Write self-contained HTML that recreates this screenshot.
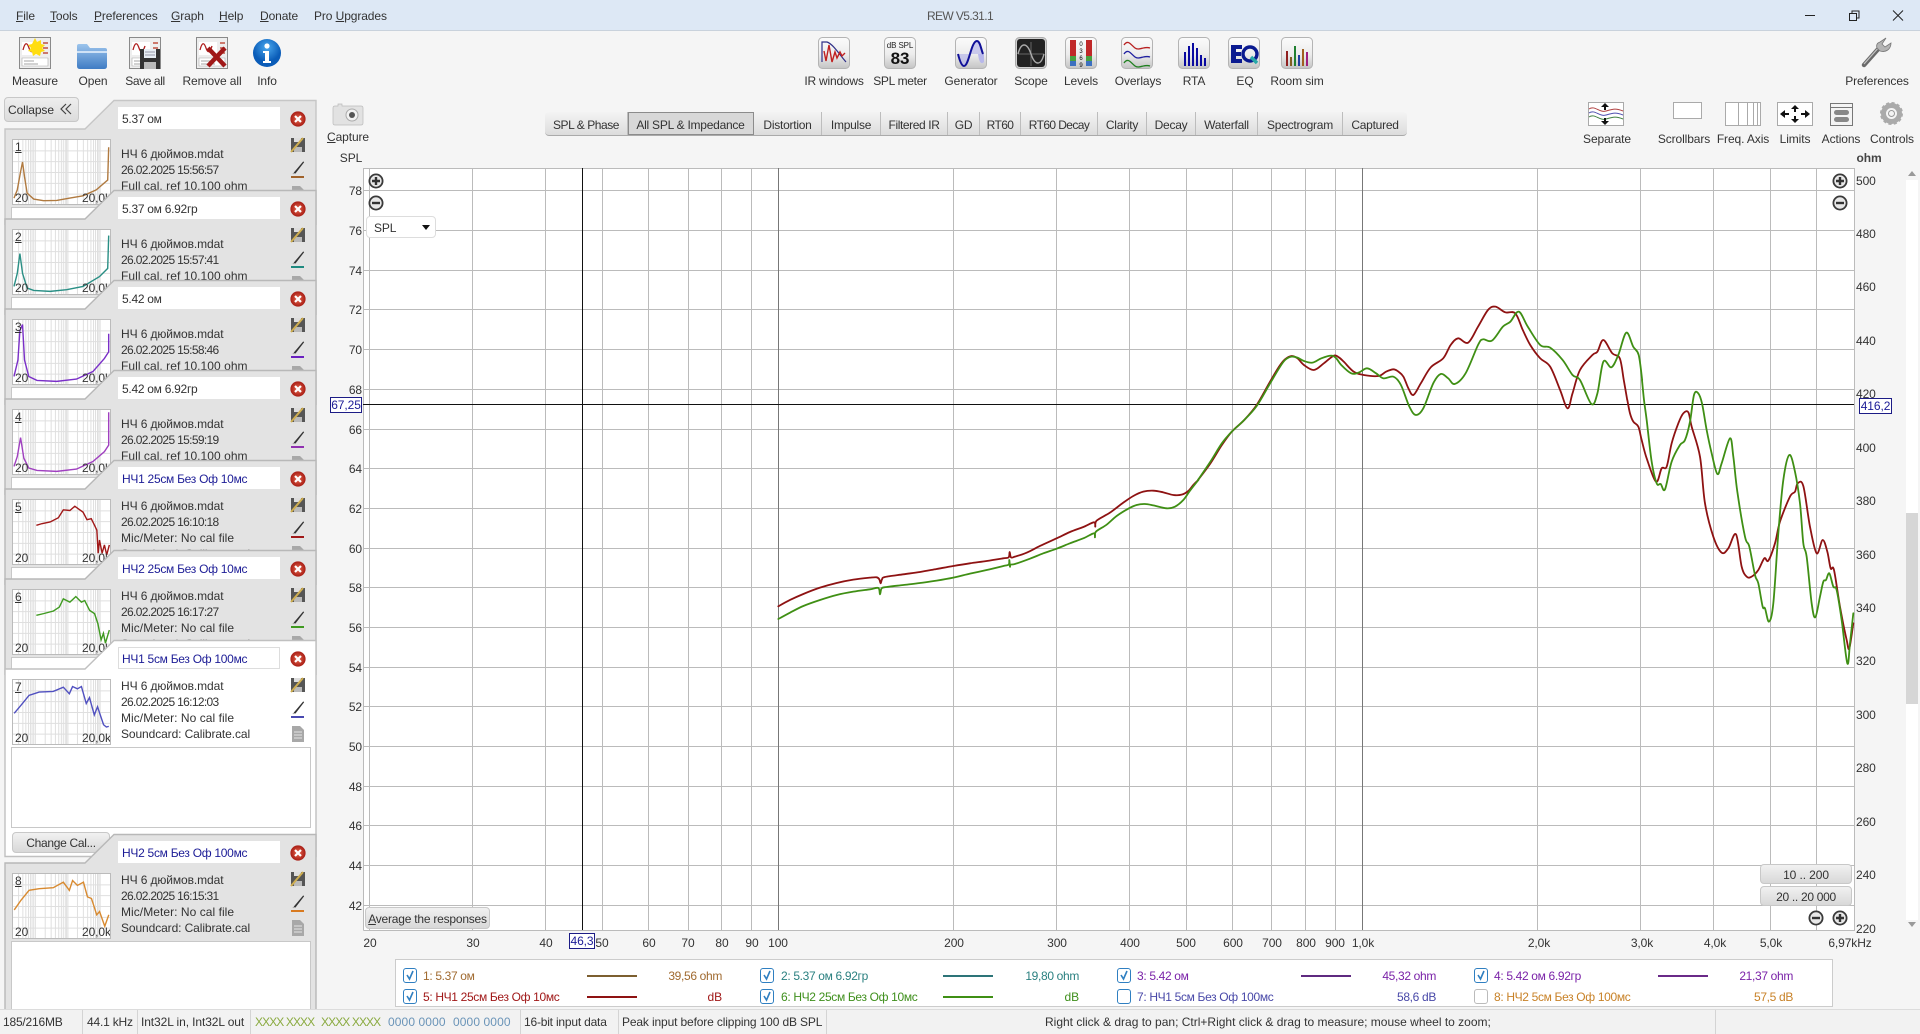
<!DOCTYPE html>
<html><head><meta charset="utf-8"><title>REW V5.31.1</title>
<style>
html,body{margin:0;padding:0;background:#f5f5f5}
#r{position:relative;width:1920px;height:1034px;overflow:hidden;background:#f5f5f5;font:12px/16px "Liberation Sans","Noto Sans CJK SC",sans-serif;color:#333;letter-spacing:-.1px}
.t{position:absolute;white-space:nowrap;line-height:16px}
.c{transform:translateX(-50%)}
.e{transform:translateX(-100%)}
.u{text-decoration:underline}
svg{position:absolute;overflow:visible}
.p{position:absolute;left:0;width:320px}
.n{position:absolute;left:118px;top:7px;width:162px;height:22px;background:#fff;line-height:25px;text-indent:4px;white-space:nowrap;letter-spacing:-.28px}
.b{color:#1c1c96}
.w .n{outline:1px solid #ddd;outline-offset:-1px}
.th{position:absolute;left:13px;top:40px;width:97px;height:64px;background:#fff;outline:1px solid #bbb;overflow:hidden}
.th svg{left:0;top:0;width:97px;height:64px}
.th i{position:absolute;font-style:normal;line-height:14px}
.box{position:absolute;left:12px;top:108px;width:298px;background:#fff;outline:1px solid #c8c8c8;height:120px}
.btn{position:absolute;text-align:center;background:linear-gradient(#f1f1f1,#d8d8d8);border:1px solid #c8c8c8;border-radius:4px;box-sizing:border-box;white-space:nowrap}
.tab{position:absolute;top:112px;height:23px;line-height:26px;text-align:center;border-right:1px solid #bdbdbd;box-sizing:border-box;white-space:nowrap;letter-spacing:-.25px}
.sep{position:absolute;top:1010px;width:1px;height:24px;background:#d4d4d4}
.lg{position:absolute;height:2px;width:50px}
.ck{position:absolute;width:12px;height:13px;border:1.5px solid #2f7fc1;border-radius:3px;background:#fff}
.ck svg{left:1px;top:1px}
.ck.o{border-color:#bbb}
.m{letter-spacing:-.1px}
.d{letter-spacing:-.66px}
.k{letter-spacing:.05px}
.y{letter-spacing:-.34px}
</style></head><body><div id="r">
<svg width="0" height="0" style="position:absolute"><defs>
<linearGradient id="g" x1="0" y1="0" x2="0" y2="1"><stop offset="0" stop-color="#fbfbfb"/><stop offset=".55" stop-color="#ececec"/><stop offset="1" stop-color="#c4c4c4"/></linearGradient>
<linearGradient id="fd" x1="0" y1="0" x2="0" y2="1"><stop offset="0" stop-color="#9cc4ec"/><stop offset="1" stop-color="#3f7cc4"/></linearGradient>
<radialGradient id="rd"><stop offset="0" stop-color="#e86a50"/><stop offset="1" stop-color="#a81c14"/></radialGradient>
<radialGradient id="bl" cx=".5" cy=".3"><stop offset="0" stop-color="#4aa8ee"/><stop offset="1" stop-color="#0a5cb8"/></radialGradient>
<symbol id="x" viewBox="0 0 16 16"><circle cx="8" cy="8" r="7.6" fill="url(#rd)"/><path d="M5 5l6 6M11 5l-6 6" stroke="#fff" stroke-width="2.2" fill="none"/></symbol>
<symbol id="sv" viewBox="0 0 16 16"><path d="M1 1h14v14H1z" fill="#555"/><path d="M4 10h8v5H4z" fill="#bbb"/><path d="M4 1h7v4H4z" fill="#ddd"/><path d="M1 15L13 1" stroke="#cfae50" stroke-width="2"/></symbol>
<symbol id="pn" viewBox="0 0 16 16"><path d="M3 14L14 1l1 1L5 15z" fill="#333"/><path d="M2 15l2 0" stroke="#999"/></symbol>
<symbol id="dc" viewBox="0 0 12 16"><path d="M0 0h8l4 4v12H0z" fill="#a8a8a8"/><path d="M2 6h8M2 9h8M2 12h8" stroke="#e4e4e4"/></symbol>
<symbol id="tg" viewBox="0 0 295 195" preserveAspectRatio="none"><path fill="none" stroke="#dfdfdf" stroke-width="3" d="M17 0v195M30 0v195M39 0v195M47 0v195M53 0v195M58 0v195M63 0v195M68 0v195M98 0v195M116 0v195M129 0v195M139 0v195M147 0v195M153 0v195M159 0v195M163 0v195M167 0v195M196 0v195M214 0v195M227 0v195M237 0v195M245 0v195M251 0v195M257 0v195M261 0v195M265 0v195M0 33h295M0 66h295M0 99h295M0 132h295M0 165h295"/></symbol>
<symbol id="pm" viewBox="0 0 16 16"><circle cx="8" cy="8" r="6.6" fill="#e8e8e8" stroke="#3a3a3a" stroke-width="1.8"/><path d="M4 8h8M8 4v8" stroke="#333" stroke-width="2.4"/></symbol>
<symbol id="mm" viewBox="0 0 16 16"><circle cx="8" cy="8" r="6.6" fill="#e8e8e8" stroke="#3a3a3a" stroke-width="1.8"/><path d="M4 8h8" stroke="#333" stroke-width="2.4"/></symbol>
<symbol id="card" viewBox="0 0 32 32"><path d="M.5.5h31v31H.5z" fill="#eee" stroke="#8a8a8a"/><path d="M3 5h18v13H3z" fill="#fff"/><path d="M4 13c2-8 4-8 6-2s4 4 6-2" fill="none" stroke="#b02020" stroke-width="1.3"/><path d="M24 6h5M24 11h5M24 16h5" stroke="#c05040" stroke-width="1.6"/><path d="M3 21h26v8H3z" fill="#fff" stroke="#aaa" stroke-width=".6"/><path d="M5 24h10M5 27h14" stroke="#888" stroke-width=".8"/></symbol>
</defs></svg>

<!-- title bar -->
<div style="position:absolute;left:0;top:0;width:1920px;height:30px;background:#dde8f5;border-bottom:1px solid #c9d2dc"></div>
<div class="t" style="left:16px;top:8px"><span class="u">F</span>ile</div>
<div class="t" style="left:50px;top:8px"><span class="u">T</span>ools</div>
<div class="t" style="left:94px;top:8px"><span class="u">P</span>references</div>
<div class="t" style="left:171px;top:8px"><span class="u">G</span>raph</div>
<div class="t" style="left:219px;top:8px"><span class="u">H</span>elp</div>
<div class="t" style="left:260px;top:8px"><span class="u">D</span>onate</div>
<div class="t" style="left:314px;top:8px">Pro <span class="u">U</span>pgrades</div>
<div class="t c" style="left:960px;top:8px;color:#555;letter-spacing:-.6px">REW V5.31.1</div>
<svg style="left:1805px;top:10px" width="100" height="12"><path d="M0 5.5h10" stroke="#222"/><path d="M44.5 3.5h7v7h-7zM47 3V1h7v7h-2" fill="none" stroke="#222"/><path d="M88 .5l10 10M98 .5l-10 10" stroke="#222"/></svg>

<!-- left toolbar -->
<svg style="left:19px;top:37px" width="32" height="32"><use href="#card" width="32" height="32"/><path d="M16 1l2 4 4-2 0 4 4 1-3 3 3 3-4 1-1 4-4-2-3 2-1-4-4-1 3-3-3-3 4-1z" fill="#ffdd10"/></svg>
<svg style="left:76px;top:42px" width="32" height="28"><path d="M1 4q0-2 2-2h8l3 4h15q2 0 2 2v16q0 3-3 3H4q-3 0-3-3z" fill="url(#fd)"/><path d="M1 10h30" stroke="#cfe2f6" stroke-width="2"/></svg>
<svg style="left:129px;top:37px" width="32" height="32"><use href="#card" width="32" height="32"/><path d="M11 12h20v20H11z" fill="#333"/><path d="M15 12h12v9H15z" fill="#e8eef4"/><path d="M16 15h10M16 18h10" stroke="#99a"/><path d="M15 25h12v7H15z" fill="#bbb"/></svg>
<svg style="left:196px;top:37px" width="32" height="32"><use href="#card" width="32" height="32"/><path d="M12 11l17 18M29 11L12 29" stroke="#a01818" stroke-width="4.5"/></svg>
<svg style="left:253px;top:39px" width="28" height="28"><circle cx="14" cy="14" r="14" fill="url(#bl)"/><circle cx="14" cy="7" r="2.6" fill="#fff"/><path d="M10 12h6v10h2v2h-8v-2h2v-8h-2z" fill="#fff"/></svg>
<div class="t c" style="left:35px;top:73px">Measure</div>
<div class="t c" style="left:93px;top:73px">Open</div>
<div class="t c" style="left:145px;top:73px;letter-spacing:-.4px">Save all</div>
<div class="t c" style="left:212px;top:73px">Remove all</div>
<div class="t c" style="left:267px;top:73px">Info</div>

<!-- centre toolbar -->
<svg style="left:818px;top:37px" width="32" height="32"><rect x=".5" y=".5" width="31" height="31" rx="4" fill="url(#g)" stroke="#b4b4b4"/><path d="M4 25V5h5c6 2 12 12 19 20" fill="none" stroke="#303088" stroke-width="1.2"/><path d="M6 14l2 10 3-16 3 17 3-10 2 6 3-6 2 4 3-3" fill="none" stroke="#c02020" stroke-width="1.4"/></svg>
<svg style="left:884px;top:37px" width="32" height="32"><rect x=".5" y=".5" width="31" height="31" rx="4" fill="url(#g)" stroke="#b4b4b4"/><text x="16" y="11" font-size="8" text-anchor="middle" font-family="Liberation Sans" fill="#222">dB SPL</text><text x="16" y="27" font-size="17" font-weight="bold" text-anchor="middle" font-family="Liberation Sans" fill="#111">83</text></svg>
<svg style="left:955px;top:37px" width="32" height="32"><rect x=".5" y=".5" width="31" height="31" rx="4" fill="url(#g)" stroke="#b4b4b4"/><path d="M3 17h26v8c-3 3-5 0-6-8" fill="#b8b8ea"/><path d="M3 17c2 0 3 12 6 12 5 0 7-25 13-25 3 0 4 8 6 13" fill="#b8b8ea" opacity=".7"/><path d="M3 17q3 12 6 12c5 0 7-25 13-25 3 0 4 8 6 13" fill="none" stroke="#101098" stroke-width="2"/></svg>
<svg style="left:1015px;top:37px" width="32" height="32"><rect x=".5" y=".5" width="31" height="31" rx="4" fill="#d0d0d0" stroke="#aaa"/><rect x="2" y="2" width="28" height="28" rx="3" fill="#222"/><path d="M16 5v24M3 17h26" stroke="#666"/><path d="M3 17c3-12 9-12 13 0s10 12 13 0" fill="none" stroke="#aaa" stroke-width="1.4"/></svg>
<svg style="left:1065px;top:37px" width="32" height="32"><rect x=".5" y=".5" width="31" height="31" rx="4" fill="url(#g)" stroke="#b4b4b4"/><path d="M5 3h6v16H5zM21 3h6v16h-6z" fill="#c02828"/><path d="M5 19h6v5H5zM21 19h6v5h-6z" fill="#48a040"/><path d="M5 24h6v5H5zM21 24h6v5h-6z" fill="#3c70c0"/><text x="16" y="9" font-size="6" text-anchor="middle" font-family="Liberation Sans">0</text><text x="16" y="16" font-size="6" text-anchor="middle" font-family="Liberation Sans">3</text><text x="16" y="23" font-size="6" text-anchor="middle" font-family="Liberation Sans">6</text><text x="16" y="30" font-size="6" text-anchor="middle" font-family="Liberation Sans">9</text></svg>
<svg style="left:1121px;top:37px" width="32" height="32"><rect x=".5" y=".5" width="31" height="31" rx="4" fill="url(#g)" stroke="#b4b4b4"/><path d="M3 8c4-6 7 0 11 3s9-2 15 0" fill="none" stroke="#b82020" stroke-width="1.3"/><path d="M3 17c4-6 7 0 11 3s9-2 15 0" fill="none" stroke="#2020a0" stroke-width="1.3"/><path d="M3 26c4-6 7 0 11 3s9-2 15 0" fill="none" stroke="#208020" stroke-width="1.3"/></svg>
<svg style="left:1178px;top:37px" width="32" height="32"><rect x=".5" y=".5" width="31" height="31" rx="4" fill="url(#g)" stroke="#b4b4b4"/><path d="M6 15h2v14H6zM10 9h2v20h-2zM14 6h2v23h-2zM18 11h2v18h-2zM22 18h2v11h-2zM26 21h2v8h-2z" fill="#0a0aa0"/></svg>
<svg style="left:1228px;top:37px" width="32" height="32"><rect x=".5" y=".5" width="31" height="31" rx="4" fill="url(#g)" stroke="#b4b4b4"/><path d="M3 8h11v4H8v3h5v4H8v3h6v4H3z" fill="#0a1a90"/><circle cx="22" cy="17" r="7" fill="none" stroke="#0a1a90" stroke-width="3.4"/><path d="M23 20l6 6" stroke="#28a8a8" stroke-width="3.4"/></svg>
<svg style="left:1281px;top:37px" width="32" height="32"><rect x=".5" y=".5" width="31" height="31" rx="4" fill="url(#g)" stroke="#b4b4b4"/><path d="M5 14h2v15H5z" fill="#902020"/><path d="M9 20h2v9H9z" fill="#806020"/><path d="M13 9h2v20h-2z" fill="#208030"/><path d="M17 18h2v11h-2z" fill="#2040a0"/><path d="M21 12h2v17h-2z" fill="#a06020"/><path d="M25 15h2v14h-2z" fill="#a02080"/></svg>
<div class="t c" style="left:834px;top:73px;letter-spacing:-.2px">IR windows</div>
<div class="t c" style="left:900px;top:73px;letter-spacing:-.3px">SPL meter</div>
<div class="t c" style="left:971px;top:73px">Generator</div>
<div class="t c" style="left:1031px;top:73px">Scope</div>
<div class="t c" style="left:1081px;top:73px">Levels</div>
<div class="t c" style="left:1138px;top:73px">Overlays</div>
<div class="t c" style="left:1194px;top:73px">RTA</div>
<div class="t c" style="left:1245px;top:73px">EQ</div>
<div class="t c" style="left:1297px;top:73px">Room sim</div>

<!-- wrench -->
<svg style="left:1860px;top:37px" width="32" height="32"><path d="M4 28L20 10" stroke="#6a6a6a" stroke-width="4.5" stroke-linecap="round"/><path d="M4 27L20 9" stroke="#c4c4c4" stroke-width="1.2"/><path d="M20 5l6-4-4 6 3 3 6-4c0 6-5 10-11 8l-3-3c-1-3 0-5 3-6z" fill="#b4b4b4" stroke="#777" stroke-width=".8"/></svg>
<div class="t c" style="left:1877px;top:73px">Preferences</div>

<!-- right graph tools -->
<svg style="left:1588px;top:102px" width="36" height="24"><path d="M.5.5h35v23H.5z" fill="#fff" stroke="#aaa"/><path d="M1 7c6-4 10 4 17 2s10-3 17 0" fill="none" stroke="#b04040"/><path d="M1 11c6-4 10 4 17 2s10-3 17 0" fill="none" stroke="#5050b0"/><path d="M1 15c6-4 10 4 17 2s10-3 17 0" fill="none" stroke="#408040"/><path d="M17 1l-4 4h3v3h2V5h3zM17 23l-4-4h3v-3h2v3h3z" fill="#111"/></svg>
<svg style="left:1673px;top:102px" width="29" height="17"><path d="M.5.5h28v16H.5z" fill="#fff" stroke="#aaa"/></svg>
<svg style="left:1725px;top:102px" width="36" height="24"><path d="M.5.5h35v23H.5z" fill="#fff" stroke="#aaa"/><path d="M13.5 0v24M22.5 0v24M28.5 0v24M32.5 0v24" stroke="#aaa"/></svg>
<svg style="left:1777px;top:102px" width="36" height="24"><path d="M.5.5h35v23H.5z" fill="#fff" stroke="#aaa"/><path d="M3 12l5-4v3h4v2H8v3zM33 12l-5-4v3h-4v2h4v3zM18 3l-4 4h3v3h2V7h3zM18 21l-4-4h3v-3h2v3h3z" fill="#111"/></svg>
<svg style="left:1830px;top:103px" width="23" height="23"><path d="M.5.5h22v22H.5z" fill="#f4f4f4" stroke="#777"/><path d="M1 4.5h21" stroke="#777"/><rect x="4" y="7" width="15" height="5" rx="2.5" fill="#888"/><rect x="4" y="14" width="15" height="5" rx="2.5" fill="#888"/></svg>
<svg style="left:1880px;top:102px" width="23" height="23"><circle cx="11.5" cy="11.5" r="8" fill="none" stroke="#aaa" stroke-width="5"/><circle cx="11.5" cy="11.5" r="10" fill="none" stroke="#aaa" stroke-width="3" stroke-dasharray="3 2.2"/><circle cx="11.5" cy="11.5" r="3" fill="#f4f4f4" stroke="#999"/></svg>
<div class="t c" style="left:1607px;top:131px">Separate</div>
<div class="t c" style="left:1684px;top:131px">Scrollbars</div>
<div class="t c" style="left:1743px;top:131px">Freq. Axis</div>
<div class="t c" style="left:1795px;top:131px">Limits</div>
<div class="t c" style="left:1841px;top:131px">Actions</div>
<div class="t c" style="left:1892px;top:131px">Controls</div>

<!-- capture -->
<svg style="left:333px;top:103px" width="30" height="22"><path d="M5 3V1h4v2h19q2 0 2 2v15q0 2-2 2H2q-2 0-2-2V5q0-2 2-2z" fill="#e2e2e2" stroke="#bbb" stroke-width=".7"/><circle cx="19" cy="12" r="6" fill="#f2f2f2" stroke="#aaa"/><circle cx="19" cy="12" r="3" fill="#555"/></svg>
<div class="t c" style="left:348px;top:129px"><span class="u">C</span>apture</div>
<div class="t c" style="left:351px;top:150px">SPL</div>
<div class="t c" style="left:1869px;top:150px;font-weight:bold;color:#444">ohm</div>

<!-- tabs -->
<div style="position:absolute;left:545px;top:112px;width:862px;height:23px;background:linear-gradient(#f4f4f4,#dcdcdc);border-bottom:1px solid #aaa;border-radius:4px;box-sizing:content-box"></div>
<div class="tab" style="left:545px;width:83px;letter-spacing:-.45px">SPL &amp; Phase</div>
<div class="tab" style="left:628px;width:126px;background:#d8d8d8;outline:1px solid #8c8c8c;outline-offset:-1px">All SPL &amp; Impedance</div>
<div class="tab" style="left:754px;width:68px">Distortion</div>
<div class="tab" style="left:822px;width:59px">Impulse</div>
<div class="tab" style="left:881px;width:67px;letter-spacing:-.4px">Filtered IR</div>
<div class="tab" style="left:948px;width:32px">GD</div>
<div class="tab" style="left:980px;width:41px;letter-spacing:-.6px">RT60</div>
<div class="tab" style="left:1021px;width:77px;letter-spacing:-.6px">RT60 Decay</div>
<div class="tab" style="left:1098px;width:49px">Clarity</div>
<div class="tab" style="left:1147px;width:49px">Decay</div>
<div class="tab" style="left:1196px;width:62px">Waterfall</div>
<div class="tab" style="left:1258px;width:85px">Spectrogram</div>
<div class="tab" style="left:1343px;width:64px;border:0">Captured</div>

<!-- plot -->
<svg style="left:0;top:0" width="1920" height="1034">
<rect x="363" y="168" width="1491" height="762" fill="#fff"/>
<path fill="none" stroke="#bbb" d="M363.5 930.5V168.5H1854.5V930.5H363.5
M364 190.5H1854M364 230.5H1854M364 270.5H1854M364 309.5H1854M364 349.5H1854M364 389.5H1854M364 429.5H1854M364 468.5H1854M364 508.5H1854M364 548.5H1854M364 587.5H1854M364 627.5H1854M364 667.5H1854M364 706.5H1854M364 746.5H1854M364 786.5H1854M364 825.5H1854M364 865.5H1854M364 905.5H1854
M369.5 168V930M472.5 168V930M545.5 168V930M602.5 168V930M648.5 168V930M688.5 168V930M721.5 168V930M751.5 168V930M953.5 168V930M1056.5 168V930M1129.5 168V930M1186.5 168V930M1232.5 168V930M1271.5 168V930M1305.5 168V930M1335.5 168V930M1537.5 168V930M1640.5 168V930M1713.5 168V930M1770.5 168V930M1816.5 168V930"/>
<path d="M778.5 168V930M1362.5 168V930" stroke="#777"/>
<path d="M582.5 168V930M363 404.5H1854" stroke="#111"/>
<g fill="none" stroke-linejoin="round" stroke-linecap="round">
<g stroke="#8e1212" stroke-width="1.8">
<polyline class="s" vector-effect="non-scaling-stroke" transform="translate(770 480) scale(.3333)" points="25,379 60,360 100,342 150,323 200,309 250,299 300,293 320,292 328,298 332,310 336,298 345,291 400,283 450,276 500,267 550,258 600,250 650,243 700,235 716,232 719,216 723,232 735,230 770,218 810,198 860,175 900,156 940,141 972,127 976,140 980,122 1020,98 1060,68 1090,48 1120,35 1150,32 1180,37 1210,45 1235,44 1255,33 1270,15 1285,0"/>
<polyline class="s" vector-effect="non-scaling-stroke" transform="translate(1100 280) scale(.4974 .3333)" points="197,600 222,550 245,495 265,455 290,420 315,375 340,310 360,260 372,238 385,228 397,235 410,255 430,270 450,250 470,227 480,232 490,245 510,275 530,285 560,288 575,275 590,268 600,275 610,290 620,325 630,345 645,310 665,262 690,235 705,195 720,175 740,188 760,140 780,90 795,80 815,97 835,100 850,150 865,195 885,235 905,260 925,330 940,385 950,340 965,270 990,225 1000,215 1012,180 1030,220 1045,235 1053,300 1060,360"/>
<polyline class="s" vector-effect="non-scaling-stroke" transform="translate(1620 400) scale(.3333)" points="22,0 30,40 40,65 55,80 65,120 80,175 108,245 125,205 140,200 155,130 175,70 190,40 205,37 215,80 240,170 255,310 280,410 305,458 325,445 348,403 365,500 380,530 395,530 415,510 433,475 445,482 465,430 480,365 510,290 525,275 533,250 550,258 570,380 590,460 608,420 622,455 632,505 642,510 660,620 680,720 688,745 700,670"/>
</g>
<g stroke="#3f8f14" stroke-width="1.8">
<polyline class="s" vector-effect="non-scaling-stroke" transform="translate(770 480) scale(.3333)" points="25,417 60,398 100,378 150,360 200,345 250,335 300,328 325,324 330,343 335,325 350,321 400,315 450,309 500,302 550,293 600,281 650,270 700,258 716,254 718,240 720,260 722,254 735,252 780,236 820,220 860,206 900,190 940,175 972,160 975,172 978,155 1010,134 1040,108 1075,86 1100,75 1125,72 1150,76 1190,85 1215,80 1240,60 1260,32 1285,0"/>
<polyline class="s" vector-effect="non-scaling-stroke" transform="translate(1100 280) scale(.4974 .3333)" points="197,600 222,545 245,490 265,455 290,420 315,378 340,315 360,265 372,240 385,230 397,233 410,243 427,248 445,235 465,227 475,235 485,255 505,280 520,278 537,265 555,280 570,295 590,290 605,315 622,380 635,405 650,385 670,310 685,282 700,295 713,312 735,280 760,195 770,178 788,182 810,140 825,125 842,95 860,140 885,195 905,203 930,240 950,285 965,300 988,372 1000,340 1012,245 1028,262 1042,225 1058,158 1072,200 1083,225 1090,300"/>
<polyline class="s" vector-effect="non-scaling-stroke" transform="translate(1620 400) scale(.3333)" points="66,-60 72,0 80,60 95,185 110,250 122,252 135,268 155,185 180,135 195,120 210,65 222,-15 234,-21 246,10 260,90 275,160 292,222 305,190 330,115 340,170 352,275 375,410 388,440 405,525 415,550 428,620 435,625 447,665 460,610 475,400 490,240 508,165 525,215 540,310 550,430 560,470 575,610 586,652 600,590 610,545 618,540 628,520 640,560 650,570 665,660 682,790 690,730 700,640"/>
</g>
</g>
<!-- scrollbar -->
<rect x="1906" y="180" width="12" height="740" fill="#fff"/>
<rect x="1906" y="513" width="12" height="191" fill="#d6d6d6"/>
<path d="M1908 176l4-5 4 5zM1908 922l4 5 4-5z" fill="#999"/>
<use href="#pm" x="368" y="173" width="16" height="16"/>
<use href="#mm" x="368" y="195" width="16" height="16"/>
<use href="#pm" x="1832" y="173" width="16" height="16"/>
<use href="#mm" x="1832" y="195" width="16" height="16"/>
<use href="#mm" x="1808" y="910" width="16" height="16"/>
<use href="#pm" x="1832" y="910" width="16" height="16"/>
</svg>

<!-- y labels -->
<div class="t e" style="left:362px;top:183px">78</div><div class="t e" style="left:362px;top:223px">76</div><div class="t e" style="left:362px;top:263px">74</div><div class="t e" style="left:362px;top:302px">72</div><div class="t e" style="left:362px;top:342px">70</div><div class="t e" style="left:362px;top:382px">68</div><div class="t e" style="left:362px;top:422px">66</div><div class="t e" style="left:362px;top:461px">64</div><div class="t e" style="left:362px;top:501px">62</div><div class="t e" style="left:362px;top:541px">60</div><div class="t e" style="left:362px;top:580px">58</div><div class="t e" style="left:362px;top:620px">56</div><div class="t e" style="left:362px;top:660px">54</div><div class="t e" style="left:362px;top:699px">52</div><div class="t e" style="left:362px;top:739px">50</div><div class="t e" style="left:362px;top:779px">48</div><div class="t e" style="left:362px;top:818px">46</div><div class="t e" style="left:362px;top:858px">44</div><div class="t e" style="left:362px;top:898px">42</div>
<div class="t" style="left:1856px;top:173px">500</div><div class="t" style="left:1856px;top:226px">480</div><div class="t" style="left:1856px;top:279px">460</div><div class="t" style="left:1856px;top:333px">440</div><div class="t" style="left:1856px;top:386px">420</div><div class="t" style="left:1856px;top:440px">400</div><div class="t" style="left:1856px;top:493px">380</div><div class="t" style="left:1856px;top:547px">360</div><div class="t" style="left:1856px;top:600px">340</div><div class="t" style="left:1856px;top:653px">320</div><div class="t" style="left:1856px;top:707px">300</div><div class="t" style="left:1856px;top:760px">280</div><div class="t" style="left:1856px;top:814px">260</div><div class="t" style="left:1856px;top:867px">240</div><div class="t" style="left:1856px;top:921px">220</div>

<!-- x labels -->
<div class="t c" style="left:370px;top:935px">20</div><div class="t c" style="left:473px;top:935px">30</div><div class="t c" style="left:546px;top:935px">40</div><div class="t c" style="left:602px;top:935px">50</div><div class="t c" style="left:649px;top:935px">60</div><div class="t c" style="left:688px;top:935px">70</div><div class="t c" style="left:722px;top:935px">80</div><div class="t c" style="left:752px;top:935px">90</div><div class="t c" style="left:778px;top:935px">100</div><div class="t c" style="left:954px;top:935px">200</div><div class="t c" style="left:1057px;top:935px">300</div><div class="t c" style="left:1130px;top:935px">400</div><div class="t c" style="left:1186px;top:935px">500</div><div class="t c" style="left:1233px;top:935px">600</div><div class="t c" style="left:1272px;top:935px">700</div><div class="t c" style="left:1306px;top:935px">800</div><div class="t c" style="left:1335px;top:935px">900</div><div class="t c" style="left:1363px;top:935px">1,0k</div><div class="t c" style="left:1539px;top:935px">2,0k</div><div class="t c" style="left:1642px;top:935px">3,0k</div><div class="t c" style="left:1715px;top:935px">4,0k</div><div class="t c" style="left:1771px;top:935px">5,0k</div><div class="t c" style="left:1850px;top:935px">6,97kHz</div>

<!-- cursor readouts -->
<div class="t b" style="left:330px;top:397px;width:30px;height:14px;line-height:15px;text-align:center;background:#fff;border:1px solid #1c1c86">67,25</div>
<div class="t b" style="left:1859px;top:398px;width:31px;height:14px;line-height:15px;text-align:center;background:#fff;border:1px solid #1c1c86">416,2</div>
<div class="t b" style="left:569px;top:933px;width:24px;height:14px;line-height:15px;text-align:center;background:#fff;border:1px solid #1c1c86">46,3</div>

<!-- controls on plot -->
<div class="btn" style="left:366px;top:216px;width:70px;height:22px;background:#fff;border-color:#ddd;line-height:22px;text-align:left;padding-left:7px">SPL</div>
<svg style="left:422px;top:225px" width="8" height="5"><path d="M0 0h8l-4 5z" fill="#111"/></svg>
<div class="btn" style="left:365px;top:907px;width:125px;height:22px;line-height:23px;letter-spacing:-.22px"><span class="u">A</span>verage the responses</div>
<div class="btn" style="left:1760px;top:864px;width:92px;height:20px;line-height:21px">10 .. 200</div>
<div class="btn" style="left:1760px;top:886px;width:92px;height:20px;line-height:21px;letter-spacing:-.3px">20 .. 20 000</div>

<!-- legend -->
<div style="position:absolute;left:395px;top:959px;width:1436px;height:46px;background:#fff;border:1px solid #ccc"></div>
<div class="ck" style="left:403px;top:968px"><svg width="10" height="11"><path d="M2 5l2.5 4L8 1" fill="none" stroke="#2f7fc1" stroke-width="1.6"/></svg></div>
<div class="ck" style="left:403px;top:989px"><svg width="10" height="11"><path d="M2 5l2.5 4L8 1" fill="none" stroke="#2f7fc1" stroke-width="1.6"/></svg></div>
<div class="ck" style="left:760px;top:968px"><svg width="10" height="11"><path d="M2 5l2.5 4L8 1" fill="none" stroke="#2f7fc1" stroke-width="1.6"/></svg></div>
<div class="ck" style="left:760px;top:989px"><svg width="10" height="11"><path d="M2 5l2.5 4L8 1" fill="none" stroke="#2f7fc1" stroke-width="1.6"/></svg></div>
<div class="ck" style="left:1117px;top:968px"><svg width="10" height="11"><path d="M2 5l2.5 4L8 1" fill="none" stroke="#2f7fc1" stroke-width="1.6"/></svg></div>
<div class="ck" style="left:1117px;top:989px"></div>
<div class="ck" style="left:1474px;top:968px"><svg width="10" height="11"><path d="M2 5l2.5 4L8 1" fill="none" stroke="#2f7fc1" stroke-width="1.6"/></svg></div>
<div class="ck o" style="left:1474px;top:989px"></div>

<div class="t y" style="left:423px;top:968px;color:#a06a30">1: 5.37 ом</div><div class="lg" style="left:587px;top:975px;background:#7c5f30"></div><div class="t e y" style="left:722px;top:968px;color:#a06a30">39,56 ohm</div>
<div class="t y" style="left:781px;top:968px;color:#2a8080">2: 5.37 ом 6.92гр</div><div class="lg" style="left:943px;top:975px;background:#2d7478"></div><div class="t e y" style="left:1079px;top:968px;color:#2a8080">19,80 ohm</div>
<div class="t y" style="left:1137px;top:968px;color:#7a22a8">3: 5.42 ом</div><div class="lg" style="left:1301px;top:975px;background:#5f2a80"></div><div class="t e y" style="left:1436px;top:968px;color:#7a22a8">45,32 ohm</div>
<div class="t y" style="left:1494px;top:968px;color:#7a22a8">4: 5.42 ом 6.92гр</div><div class="lg" style="left:1658px;top:975px;background:#6a2a88"></div><div class="t e y" style="left:1793px;top:968px;color:#7a22a8">21,37 ohm</div>
<div class="t y" style="left:423px;top:989px;color:#a01818">5: НЧ1 25см Без Оф 10мс</div><div class="lg" style="left:587px;top:996px;background:#8e1212"></div><div class="t e" style="left:722px;top:989px;color:#a01818">dB</div>
<div class="t y" style="left:781px;top:989px;color:#3f8f1c">6: НЧ2 25см Без Оф 10мс</div><div class="lg" style="left:943px;top:996px;background:#3f8f14"></div><div class="t e" style="left:1079px;top:989px;color:#3f8f1c">dB</div>
<div class="t y" style="left:1137px;top:989px;color:#4848a8">7: НЧ1 5см Без Оф 100мс</div><div class="t e y" style="left:1436px;top:989px;color:#4848a8">58,6 dB</div>
<div class="t y" style="left:1494px;top:989px;color:#c88228">8: НЧ2 5см Без Оф 100мс</div><div class="t e y" style="left:1793px;top:989px;color:#c88228">57,5 dB</div>

<!-- Collapse -->
<div class="btn" style="left:4px;top:97px;width:75px;height:25px;line-height:24px;text-align:left;padding-left:3px;background:linear-gradient(#eee,#dcdcdc)">Collapse</div>
<svg style="left:60px;top:104px" width="12" height="10"><path d="M6 0L1 5l5 5M11 0L6 5l5 5" fill="none" stroke="#444" stroke-width="1.2"/></svg>

<!-- panel 1 -->
<div class="p" style="top:100px;height:125px">
<svg style="left:0;top:0" width="320" height="125"><path d="M5 125V29H85L114 .5H316V125" fill="#e3e3e3" stroke="#c6c6c6" stroke-width="1.4"/></svg>
<div class="n">5.37 ом</div>
<svg style="left:290px;top:11px" width="16" height="16"><use href="#x"/></svg>
<div class="th"><svg viewBox="37 118 295 195" preserveAspectRatio="none"><use href="#tg" x="37" y="118" width="295" height="195"/><polyline vector-effect="non-scaling-stroke" fill="none" stroke="#b07a40" stroke-width="1.4" points="40,295 50,270 60,215 66,185 72,230 80,280 100,298 130,303 170,302 210,295 250,288 290,270 325,240 328,140"/></svg><i class="u" style="left:2px;top:0">1</i><i style="left:2px;top:51px">20</i><i style="left:69px;top:51px">20,0k</i></div>
<div class="t m" style="left:121px;top:46px">НЧ 6 дюймов.mdat</div><div class="t d" style="left:121px;top:62px">26.02.2025 15:56:57</div><div class="t k" style="left:121px;top:78px">Full cal. ref 10.100 ohm</div>
<svg style="left:290px;top:37px" width="16" height="16"><use href="#sv"/></svg>
<svg style="left:291px;top:60px" width="14" height="15"><use href="#pn" width="14" height="15"/></svg><div style="position:absolute;left:291px;top:76px;width:13px;height:2px;background:#a0622a"></div>
<svg style="left:292px;top:86px" width="12" height="16"><use href="#dc"/></svg>
<div class="box"></div></div>

<!-- panel 2 -->
<div class="p" style="top:190px;height:125px">
<svg style="left:0;top:0" width="320" height="125"><path d="M5 125V29H85L114 .5H316V125" fill="#e3e3e3" stroke="#b8b8b8" stroke-width="1.4"/></svg>
<div class="n">5.37 ом 6.92гр</div>
<svg style="left:290px;top:11px" width="16" height="16"><use href="#x"/></svg>
<div class="th"><svg viewBox="37 118 295 195" preserveAspectRatio="none"><use href="#tg" x="37" y="118" width="295" height="195"/><polyline vector-effect="non-scaling-stroke" fill="none" stroke="#2a8f85" stroke-width="1.4" points="40,290 50,250 58,190 66,250 80,295 100,302 150,305 200,300 250,290 300,260 325,235 328,135"/></svg><i class="u" style="left:2px;top:0">2</i><i style="left:2px;top:51px">20</i><i style="left:69px;top:51px">20,0k</i></div>
<div class="t m" style="left:121px;top:46px">НЧ 6 дюймов.mdat</div><div class="t d" style="left:121px;top:62px">26.02.2025 15:57:41</div><div class="t k" style="left:121px;top:78px">Full cal. ref 10.100 ohm</div>
<svg style="left:290px;top:37px" width="16" height="16"><use href="#sv"/></svg>
<svg style="left:291px;top:60px" width="14" height="15"><use href="#pn" width="14" height="15"/></svg><div style="position:absolute;left:291px;top:76px;width:13px;height:2px;background:#1f8a80"></div>
<svg style="left:292px;top:86px" width="12" height="16"><use href="#dc"/></svg>
<div class="box"></div></div>

<!-- panel 3 -->
<div class="p" style="top:280px;height:125px">
<svg style="left:0;top:0" width="320" height="125"><path d="M5 125V29H85L114 .5H316V125" fill="#e3e3e3" stroke="#b8b8b8" stroke-width="1.4"/></svg>
<div class="n">5.42 ом</div>
<svg style="left:290px;top:11px" width="16" height="16"><use href="#x"/></svg>
<div class="th"><svg viewBox="37 118 295 195" preserveAspectRatio="none"><use href="#tg" x="37" y="118" width="295" height="195"/><polyline vector-effect="non-scaling-stroke" fill="none" stroke="#7a2fc8" stroke-width="1.4" points="40,290 52,240 58,150 66,132 72,240 85,290 110,302 170,305 230,298 280,275 315,235 328,215 328,160"/></svg><i class="u" style="left:2px;top:0">3</i><i style="left:2px;top:51px">20</i><i style="left:69px;top:51px">20,0k</i></div>
<div class="t m" style="left:121px;top:46px">НЧ 6 дюймов.mdat</div><div class="t d" style="left:121px;top:62px">26.02.2025 15:58:46</div><div class="t k" style="left:121px;top:78px">Full cal. ref 10.100 ohm</div>
<svg style="left:290px;top:37px" width="16" height="16"><use href="#sv"/></svg>
<svg style="left:291px;top:60px" width="14" height="15"><use href="#pn" width="14" height="15"/></svg><div style="position:absolute;left:291px;top:76px;width:13px;height:2px;background:#6a20c0"></div>
<svg style="left:292px;top:86px" width="12" height="16"><use href="#dc"/></svg>
<div class="box"></div></div>

<!-- panel 4 -->
<div class="p" style="top:370px;height:125px">
<svg style="left:0;top:0" width="320" height="125"><path d="M5 125V29H85L114 .5H316V125" fill="#e3e3e3" stroke="#b8b8b8" stroke-width="1.4"/></svg>
<div class="n">5.42 ом 6.92гр</div>
<svg style="left:290px;top:11px" width="16" height="16"><use href="#x"/></svg>
<div class="th"><svg viewBox="37 118 295 195" preserveAspectRatio="none"><use href="#tg" x="37" y="118" width="295" height="195"/><polyline vector-effect="non-scaling-stroke" fill="none" stroke="#a040c0" stroke-width="1.4" points="40,290 50,260 60,202 70,265 85,295 110,302 170,305 230,298 280,275 315,245 328,225 328,125"/></svg><i class="u" style="left:2px;top:0">4</i><i style="left:2px;top:51px">20</i><i style="left:69px;top:51px">20,0k</i></div>
<div class="t m" style="left:121px;top:46px">НЧ 6 дюймов.mdat</div><div class="t d" style="left:121px;top:62px">26.02.2025 15:59:19</div><div class="t k" style="left:121px;top:78px">Full cal. ref 10.100 ohm</div>
<svg style="left:290px;top:37px" width="16" height="16"><use href="#sv"/></svg>
<svg style="left:291px;top:60px" width="14" height="15"><use href="#pn" width="14" height="15"/></svg><div style="position:absolute;left:291px;top:76px;width:13px;height:2px;background:#9030b0"></div>
<svg style="left:292px;top:86px" width="12" height="16"><use href="#dc"/></svg>
<div class="box"></div></div>

<!-- panel 5 -->
<div class="p" style="top:460px;height:125px">
<svg style="left:0;top:0" width="320" height="125"><path d="M5 125V29H85L114 .5H316V125" fill="#e3e3e3" stroke="#b8b8b8" stroke-width="1.4"/></svg>
<div class="n b">НЧ1 25см Без Оф 10мс</div>
<svg style="left:290px;top:11px" width="16" height="16"><use href="#x"/></svg>
<div class="th"><svg viewBox="37 118 295 195" preserveAspectRatio="none"><use href="#tg" x="37" y="118" width="295" height="195"/><polyline vector-effect="non-scaling-stroke" fill="none" stroke="#a01818" stroke-width="1.4" points="108,195 125,190 150,185 175,172 190,148 210,150 225,137 240,148 250,155 262,178 275,175 285,195 292,210 296,280 300,240 308,280 315,255 322,285 330,255"/></svg><i class="u" style="left:2px;top:0">5</i><i style="left:2px;top:51px">20</i><i style="left:69px;top:51px">20,0k</i></div>
<div class="t m" style="left:121px;top:38px">НЧ 6 дюймов.mdat</div><div class="t d" style="left:121px;top:54px">26.02.2025 16:10:18</div><div class="t k" style="left:121px;top:70px">Mic/Meter: No cal file</div><div class="t" style="left:121px;top:86px">Soundcard: Calibrate.cal</div>
<svg style="left:290px;top:37px" width="16" height="16"><use href="#sv"/></svg>
<svg style="left:291px;top:60px" width="14" height="15"><use href="#pn" width="14" height="15"/></svg><div style="position:absolute;left:291px;top:76px;width:13px;height:2px;background:#a01818"></div>
<svg style="left:292px;top:86px" width="12" height="16"><use href="#dc"/></svg>
<div class="box"></div></div>

<!-- panel 6 -->
<div class="p" style="top:550px;height:125px">
<svg style="left:0;top:0" width="320" height="125"><path d="M5 125V29H85L114 .5H316V125" fill="#e3e3e3" stroke="#b8b8b8" stroke-width="1.4"/></svg>
<div class="n b">НЧ2 25см Без Оф 10мс</div>
<svg style="left:290px;top:11px" width="16" height="16"><use href="#x"/></svg>
<div class="th"><svg viewBox="37 118 295 195" preserveAspectRatio="none"><use href="#tg" x="37" y="118" width="295" height="195"/><polyline vector-effect="non-scaling-stroke" fill="none" stroke="#3f9a20" stroke-width="1.4" points="108,195 130,190 160,182 178,170 190,145 210,155 228,138 245,155 255,150 270,180 285,190 295,220 305,270 312,250 318,280 330,240"/></svg><i class="u" style="left:2px;top:0">6</i><i style="left:2px;top:51px">20</i><i style="left:69px;top:51px">20,0k</i></div>
<div class="t m" style="left:121px;top:38px">НЧ 6 дюймов.mdat</div><div class="t d" style="left:121px;top:54px">26.02.2025 16:17:27</div><div class="t k" style="left:121px;top:70px">Mic/Meter: No cal file</div><div class="t" style="left:121px;top:86px">Soundcard: Calibrate.cal</div>
<svg style="left:290px;top:37px" width="16" height="16"><use href="#sv"/></svg>
<svg style="left:291px;top:60px" width="14" height="15"><use href="#pn" width="14" height="15"/></svg><div style="position:absolute;left:291px;top:76px;width:13px;height:2px;background:#3f9a20"></div>
<svg style="left:292px;top:86px" width="12" height="16"><use href="#dc"/></svg>
<div class="box"></div></div>

<!-- panel 7 (selected) -->
<div class="p w" style="top:640px;height:217px">
<svg style="left:0;top:0" width="320" height="217"><path d="M5 216.5V29H85L114 .5H316V216.5z" fill="#fff" stroke="#c0c0c0" stroke-width="1.4"/></svg>
<div class="n b">НЧ1 5см Без Оф 100мс</div>
<svg style="left:290px;top:11px" width="16" height="16"><use href="#x"/></svg>
<div class="th"><svg viewBox="30 118 241 196" preserveAspectRatio="none"><use href="#tg" x="30" y="118" width="241" height="196"/><polyline vector-effect="non-scaling-stroke" fill="none" stroke="#5050c0" stroke-width="1.4" points="33,220 50,195 70,165 95,155 130,153 155,140 170,160 178,138 190,145 200,138 212,190 220,172 232,225 240,200 255,255 262,262 268,260"/></svg><i class="u" style="left:2px;top:0">7</i><i style="left:2px;top:51px">20</i><i style="left:69px;top:51px">20,0k</i></div>
<div class="t m" style="left:121px;top:38px">НЧ 6 дюймов.mdat</div><div class="t d" style="left:121px;top:54px">26.02.2025 16:12:03</div><div class="t k" style="left:121px;top:70px">Mic/Meter: No cal file</div><div class="t" style="left:121px;top:86px">Soundcard: Calibrate.cal</div>
<svg style="left:290px;top:37px" width="16" height="16"><use href="#sv"/></svg>
<svg style="left:291px;top:60px" width="14" height="15"><use href="#pn" width="14" height="15"/></svg><div style="position:absolute;left:291px;top:76px;width:13px;height:2px;background:#4848b0"></div>
<svg style="left:292px;top:86px" width="12" height="16"><use href="#dc"/></svg>
<div class="box" style="height:79px"></div>
<div class="btn" style="left:12px;top:192px;width:98px;height:21px;line-height:21px;letter-spacing:-.3px">Change Cal...</div></div>

<!-- panel 8 -->
<div class="p" style="top:834px;height:200px">
<svg style="left:0;top:0" width="320" height="200"><path d="M5 200V29H85L114 .5H316V200" fill="#e3e3e3" stroke="#b8b8b8" stroke-width="1.4"/></svg>
<div class="n b">НЧ2 5см Без Оф 100мс</div>
<svg style="left:290px;top:11px" width="16" height="16"><use href="#x"/></svg>
<div class="th"><svg viewBox="30 118 241 196" preserveAspectRatio="none"><use href="#tg" x="30" y="118" width="241" height="196"/><polyline vector-effect="non-scaling-stroke" fill="none" stroke="#d88a30" stroke-width="1.4" points="33,228 50,198 70,168 95,163 130,160 155,143 170,168 178,138 190,153 205,143 215,188 225,193 238,243 245,233 258,278 268,243"/></svg><i class="u" style="left:2px;top:0">8</i><i style="left:2px;top:51px">20</i><i style="left:69px;top:51px">20,0k</i></div>
<div class="t m" style="left:121px;top:38px">НЧ 6 дюймов.mdat</div><div class="t d" style="left:121px;top:54px">26.02.2025 16:15:31</div><div class="t k" style="left:121px;top:70px">Mic/Meter: No cal file</div><div class="t" style="left:121px;top:86px">Soundcard: Calibrate.cal</div>
<svg style="left:290px;top:37px" width="16" height="16"><use href="#sv"/></svg>
<svg style="left:291px;top:60px" width="14" height="15"><use href="#pn" width="14" height="15"/></svg><div style="position:absolute;left:291px;top:76px;width:13px;height:2px;background:#d87a20"></div>
<svg style="left:292px;top:86px" width="12" height="16"><use href="#dc"/></svg>
<div class="box"></div></div>

<!-- status bar -->
<div style="position:absolute;left:0;top:1009px;width:1920px;height:25px;background:#f2f2f2;border-top:1px solid #dcdcdc;box-sizing:border-box"></div>
<div class="sep" style="left:82px"></div><div class="sep" style="left:137px"></div><div class="sep" style="left:250px"></div><div class="sep" style="left:520px"></div><div class="sep" style="left:618px"></div><div class="sep" style="left:826px"></div><div class="sep" style="left:1715px"></div>
<div class="t" style="left:3px;top:1014px;letter-spacing:-.2px">185/216MB</div>
<div class="t" style="left:87px;top:1014px;letter-spacing:-.2px">44.1 kHz</div>
<div class="t" style="left:141px;top:1014px;letter-spacing:-.1px">Int32L in, Int32L out</div>
<div class="t" style="left:255px;top:1014px;color:#8aaa40;letter-spacing:-.9px">XXXX XXXX</div>
<div class="t" style="left:321px;top:1014px;color:#8aaa40;letter-spacing:-.9px">XXXX XXXX</div>
<div class="t" style="left:388px;top:1014px;color:#6a94b8;letter-spacing:.1px">0000 0000</div>
<div class="t" style="left:453px;top:1014px;color:#6a94b8;letter-spacing:.1px">0000 0000</div>
<div class="t" style="left:524px;top:1014px;letter-spacing:-.2px">16-bit input data</div>
<div class="t" style="left:622px;top:1014px;letter-spacing:-.14px">Peak input before clipping 100 dB SPL</div>
<div class="t" style="left:1045px;top:1014px;letter-spacing:0">Right click &amp; drag to pan; Ctrl+Right click &amp; drag to measure; mouse wheel to zoom;</div>
</div>
<script>
document.querySelectorAll('polyline.s').forEach(function(l){
var a=l.getAttribute('points').trim().split(/\s+/).map(function(s){return s.split(',').map(Number)});
var d='M'+a[0][0]+' '+a[0][1];
for(var i=0;i<a.length-1;i++){
var p0=a[i-1]||a[i],p1=a[i],p2=a[i+1],p3=a[i+2]||p2;
d+='C'+(p1[0]+(p2[0]-p0[0])/6).toFixed(1)+' '+(p1[1]+(p2[1]-p0[1])/6).toFixed(1)+' '+(p2[0]-(p3[0]-p1[0])/6).toFixed(1)+' '+(p2[1]-(p3[1]-p1[1])/6).toFixed(1)+' '+p2[0]+' '+p2[1];
}
var n=document.createElementNS('http://www.w3.org/2000/svg','path');
n.setAttribute('d',d);n.setAttribute('transform',l.getAttribute('transform'));n.setAttribute('vector-effect','non-scaling-stroke');
l.parentNode.replaceChild(n,l);
});
</script>
</body></html>
